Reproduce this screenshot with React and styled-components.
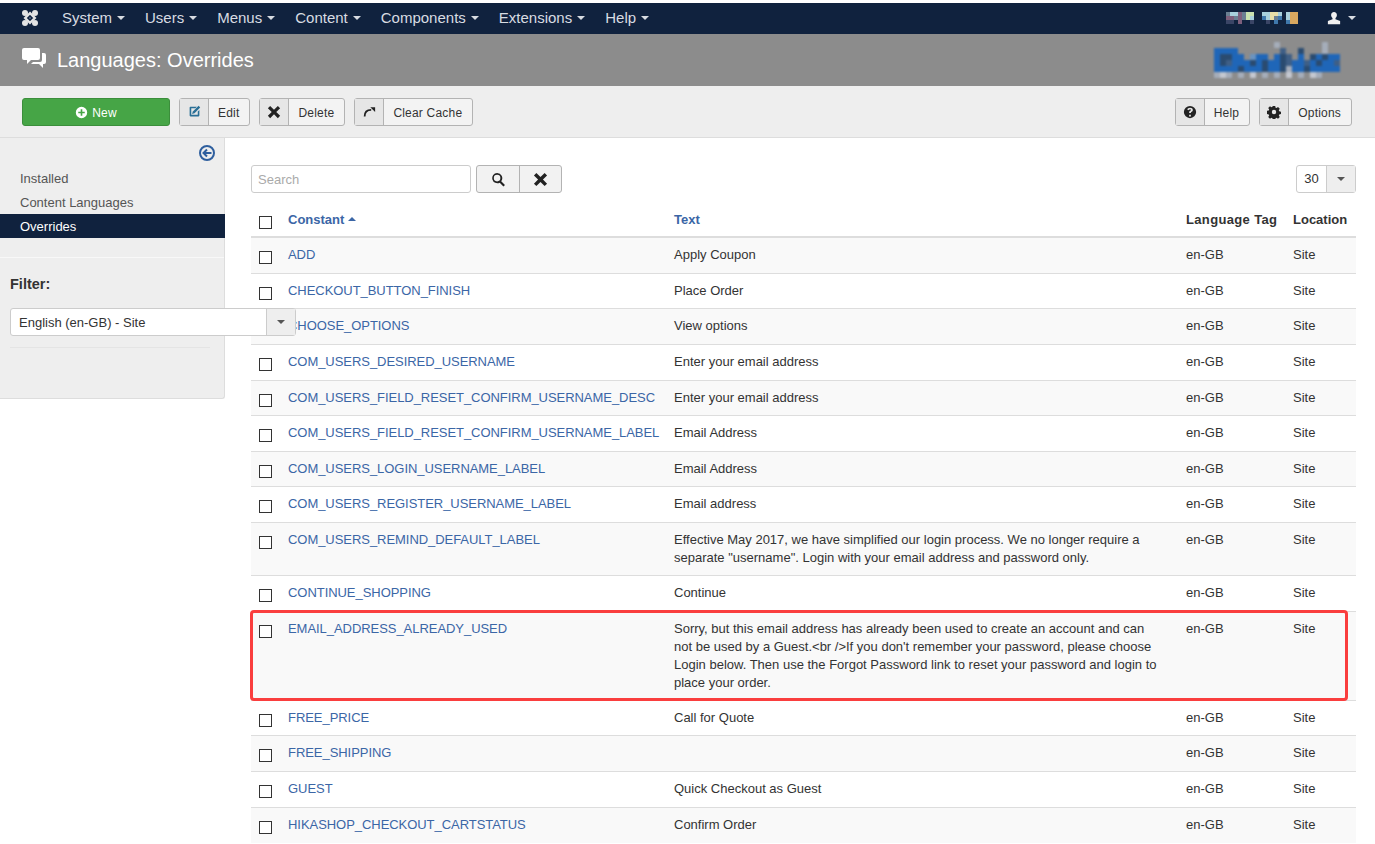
import React from "react";
import styled, { createGlobalStyle, css } from "styled-components";

const COLORS = {
  navy: "#10223e",
  link: "#3b66a6",
  border: "#ccc",
  text: "#333",
};

const NAV_ITEMS = ["System", "Users", "Menus", "Content", "Components", "Extensions", "Help"];

const ROWS = [
  ["ADD", "Apply Coupon"],
  ["CHECKOUT_BUTTON_FINISH", "Place Order"],
  ["CHOOSE_OPTIONS", "View options"],
  ["COM_USERS_DESIRED_USERNAME", "Enter your email address"],
  ["COM_USERS_FIELD_RESET_CONFIRM_USERNAME_DESC", "Enter your email address"],
  ["COM_USERS_FIELD_RESET_CONFIRM_USERNAME_LABEL", "Email Address"],
  ["COM_USERS_LOGIN_USERNAME_LABEL", "Email Address"],
  ["COM_USERS_REGISTER_USERNAME_LABEL", "Email address"],
  [
    "COM_USERS_REMIND_DEFAULT_LABEL",
    'Effective May 2017, we have simplified our login process. We no longer require a separate "username". Login with your email address and password only.',
  ],
  ["CONTINUE_SHOPPING", "Continue"],
  [
    "EMAIL_ADDRESS_ALREADY_USED",
    "Sorry, but this email address has already been used to create an account and can not be used by a Guest.<br />If you don't remember your password, please choose Login below. Then use the Forgot Password link to reset your password and login to place your order.",
    true,
  ],
  ["FREE_PRICE", "Call for Quote"],
  ["FREE_SHIPPING", ""],
  ["GUEST", "Quick Checkout as Guest"],
  ["HIKASHOP_CHECKOUT_CARTSTATUS", "Confirm Order"],
];

const GlobalStyle = createGlobalStyle`
  html, body {
    margin: 0;
    padding: 0;
    background: #fff;
    color: ${COLORS.text};
    font-family: "Liberation Sans", Arial, sans-serif;
    font-size: 13px;
    line-height: 18px;
  }
  * { box-sizing: border-box; }
`;

function JoomlaMark() {
  return (
    <svg width="18" height="18" viewBox="0 0 18 18" fill="#e4e4e4">
      <path d="M9 4.200 13.800 9 9 13.800 4.200 9Z" fill="none" stroke="#e4e4e4" strokeWidth="2.400" />
      <circle cx="4" cy="4" r="3" />
      <circle cx="14" cy="4" r="3" />
      <circle cx="4" cy="14" r="3" />
      <circle cx="14" cy="14" r="3" />
      <circle cx="9" cy="9" r="1" fill="#5a6c88" />
    </svg>
  );
}

function Mosaic({ width, height, cell, data, palette }) {
  return (
    <svg width={width} height={height} style={{ display: "block" }}>
      {data.map((row, y) =>
        row.split("").map((c, x) =>
          c === "." ? null : (
            <rect key={`${x}-${y}`} x={x * cell} y={y * cell} width={cell} height={cell} fill={palette[c]} />
          )
        )
      )}
    </svg>
  );
}

const Icon = ({ size = 14, color = "currentColor", children }) => (
  <svg width={size} height={size} viewBox="0 0 16 16" fill={color}>
    {children}
  </svg>
);

const PlusCircle = (p) => (
  <Icon {...p}>
    <path fillRule="evenodd" d="M8 1a7 7 0 1 0 0 14A7 7 0 0 0 8 1zM7 4h2v3h3v2H9v3H7V9H4V7h3z" />
  </Icon>
);
const EditIcon = (p) => (
  <Icon {...p}>
    <path d="M3 2h8L9 4H4v8h8V8l2-2v7a1 1 0 0 1-1 1H3a1 1 0 0 1-1-1V3a1 1 0 0 1 1-1z" />
    <path d="M13 1l2 2-7 7-3 1 1-3z" />
  </Icon>
);
const CrossIcon = (p) => (
  <Icon {...p}>
    <path d="M3.600 1 8 5.400 12.400 1 15 3.600 10.600 8 15 12.400 12.400 15 8 10.600 3.600 15 1 12.400 5.400 8 1 3.600z" />
  </Icon>
);
const RefreshIcon = (p) => (
  <Icon {...p}>
    <path d="M3 13C3 8 6 5.500 10.500 5.500" fill="none" stroke="#222" strokeWidth="2" />
    <path d="M9.500 2.500h5.500v5.500z" />
  </Icon>
);
const HelpIcon = (p) => (
  <Icon {...p}>
    <path
      fillRule="evenodd"
      d="M8 1a7 7 0 1 0 0 14A7 7 0 0 0 8 1zM7 11h2v2H7zm1-8c2 0 3.200 1 3.200 2.600 0 1.100-.6 1.700-1.300 2.200-.6.400-.9.700-.9 1.200H7c0-1.200.5-1.800 1.200-2.300.5-.4.900-.6.900-1.100 0-.4-.4-.7-1-.7-.7 0-1.200.4-1.400 1L4.800 5C5.200 3.800 6.400 3 8 3z"
    />
  </Icon>
);
const GearIcon = (p) => (
  <Icon {...p}>
    <path
      fillRule="evenodd"
      d="M6.600 1h2.800l.4 2 1.100.5 1.700-1.100 2 2-1.100 1.700.5 1.100 2 .4v2.800l-2 .4-.5 1.100 1.100 1.700-2 2-1.700-1.100-1.100.5-.4 2H6.600l-.4-2-1.100-.5-1.700 1.100-2-2 1.100-1.700-.5-1.100-2-.4V6.600l2-.4.5-1.100-1.100-1.700 2-2 1.700 1.100 1.100-.5zM8 5.500a2.500 2.500 0 1 0 0 5 2.500 2.500 0 0 0 0-5z"
    />
  </Icon>
);
const SearchIcon = (p) => (
  <Icon {...p}>
    <path
      fillRule="evenodd"
      d="M6.500 1a5.500 5.500 0 0 1 4.400 8.800l4 4-1.600 1.600-4-4A5.500 5.500 0 1 1 6.500 1zm0 2a3.500 3.500 0 1 0 0 7 3.500 3.500 0 0 0 0-7z"
    />
  </Icon>
);
const UserIcon = (p) => (
  <Icon {...p}>
    <path d="M8 1c2 0 3.300 1.500 3.300 3.500 0 1.500-.7 2.800-1.600 3.500v1.300L15 11.500V15H1v-3.500l5.300-2.200V8C5.400 7.300 4.700 6 4.700 4.500 4.700 2.500 6 1 8 1z" />
  </Icon>
);
const BackIcon = () => (
  <svg width="18" height="18" viewBox="0 0 18 18" fill="none" stroke="#2f5f9e" strokeWidth="2">
    <circle cx="9" cy="9" r="7" />
    <path d="M13.500 9H6M9 5.500 5.500 9 9 12.500" />
  </svg>
);

export default function App() {
  return (
    <Page>
      <GlobalStyle />
      <Navbar>
        <Brand>
          <JoomlaMark />
        </Brand>
        <NavList>
          {NAV_ITEMS.map((item) => (
            <NavItem key={item}>
              {item}
              <Caret $color="#d8dce2" />
            </NavItem>
          ))}
        </NavList>
        <NavRight>
          <NavMosaic>
            <Mosaic
              width={72}
              height={12}
              cell={4}
              palette={{
                a: "#6a7f92",
                b: "#a8d0dc",
                c: "#7e5f7c",
                d: "#c9e2b0",
                e: "#e8dfa8",
                f: "#3f78ac",
                g: "#d9a860",
                h: "#3a4566",
              }}
              data={["abbcadd..bbeeb.bgg", "ccacadb..fbeaf.bgg", "hh.c..h...h.f..fgg"]}
            />
          </NavMosaic>
          <UserMenu>
            <UserIcon size={14} color="#f0f0f0" />
            <Caret $color="#d8dce2" />
          </UserMenu>
        </NavRight>
      </Navbar>

      <Header>
        <TitleIcon>
          <svg width="24" height="22" viewBox="0 0 24 22" fill="#fff">
            <path d="M2 1h14a2 2 0 0 1 2 2v8a2 2 0 0 1-2 2H9l-4 4v-4H2a2 2 0 0 1-2-2V3a2 2 0 0 1 2-2z" />
            <path d="M20 6h2a2 2 0 0 1 2 2v7a2 2 0 0 1-2 2h-1v4l-4-4H9l2-2h7a2 2 0 0 0 2-2z" />
          </svg>
        </TitleIcon>
        <Title>Languages: Overrides</Title>
        <LogoSlot>
          <Mosaic
            width={126}
            height={36}
            cell={6}
            palette={{ a: "#1f66b8", b: "#6a93c0", c: "#3f5f86", d: "#a5adba", e: "#2a4b70", f: "#c4c8d0" }}
            data={[
              "..........d.......d..",
              "aaaa.......c..e...d..",
              "aeeaa.baa.aec.a.eaeaa",
              "aecaaaeaeaaecaacaeaac",
              "aaaaeaaaeaaedaaeaaaaa",
              "dfd.d.f.d.d.f.d.fd...",
            ]}
          />
        </LogoSlot>
      </Header>

      <Toolbar>
        <ToolGroup>
          <NewButton>
            <PlusCircle size={13} color="#fff" />
            New
          </NewButton>
          <ToolButton>
            <ToolIcon $color="#2a6f96">
              <EditIcon size={13} />
            </ToolIcon>
            <ToolLabel>Edit</ToolLabel>
          </ToolButton>
          <ToolButton>
            <ToolIcon>
              <CrossIcon size={14} />
            </ToolIcon>
            <ToolLabel>Delete</ToolLabel>
          </ToolButton>
          <ToolButton>
            <ToolIcon>
              <RefreshIcon size={14} />
            </ToolIcon>
            <ToolLabel>Clear Cache</ToolLabel>
          </ToolButton>
        </ToolGroup>
        <ToolGroup>
          <ToolButton>
            <ToolIcon>
              <HelpIcon size={14} />
            </ToolIcon>
            <ToolLabel>Help</ToolLabel>
          </ToolButton>
          <ToolButton>
            <ToolIcon>
              <GearIcon size={14} />
            </ToolIcon>
            <ToolLabel>Options</ToolLabel>
          </ToolButton>
        </ToolGroup>
      </Toolbar>

      <Body>
        <Sidebar>
          <SidebarToggle>
            <BackIcon />
          </SidebarToggle>
          <SideNav>
            <SideLink>Installed</SideLink>
            <SideLink>Content Languages</SideLink>
            <SideLink $active>Overrides</SideLink>
          </SideNav>
          <FilterBlock>
            <FilterTitle>Filter:</FilterTitle>
            <FilterSelect>
              <FilterValue>English (en-GB) - Site</FilterValue>
              <SelectArrow>
                <Caret $color="#555" />
              </SelectArrow>
            </FilterSelect>
            <FilterRule />
          </FilterBlock>
        </Sidebar>

        <Main>
          <SearchBar>
            <SearchInput>Search</SearchInput>
            <SearchButtons>
              <SearchButton>
                <SearchIcon size={15} color="#222" />
              </SearchButton>
              <SearchButton>
                <CrossIcon size={15} color="#222" />
              </SearchButton>
            </SearchButtons>
            <LimitSelect>
              <LimitValue>30</LimitValue>
              <SelectArrow>
                <Caret $color="#555" />
              </SelectArrow>
            </LimitSelect>
          </SearchBar>

          <Table>
            <colgroup>
              <col width="29" />
              <col width="386" />
              <col width="512" />
              <col width="107" />
              <col width="71" />
            </colgroup>
            <thead>
              <tr>
                <HeadCell>
                  <Check />
                </HeadCell>
                <HeadCell $link>
                  Constant <SortCaret />
                </HeadCell>
                <HeadCell $link>Text</HeadCell>
                <HeadCell $spaced>Language Tag</HeadCell>
                <HeadCell>Location</HeadCell>
              </tr>
            </thead>
            <tbody>
              {ROWS.map(([key, text, marked]) => (
                <Row key={key}>
                  <CheckCell>
                    <Check />
                  </CheckCell>
                  <KeyCell>
                    {key}
                    {marked && <Highlight />}
                  </KeyCell>
                  <TextCell>{text}</TextCell>
                  <Cell>en-GB</Cell>
                  <Cell>Site</Cell>
                </Row>
              ))}
            </tbody>
          </Table>
        </Main>
      </Body>
    </Page>
  );
}

const Page = styled.div`
  width: 1375px;
  height: 844px;
  overflow: hidden;
  padding-top: 3px;
  background: #fff;
`;

const Navbar = styled.nav`
  height: 31px;
  background: ${COLORS.navy};
  display: flex;
  align-items: center;
  padding: 0 19px 2px 21px;
`;

const Brand = styled.div`
  display: flex;
  width: 41px;
`;

const NavList = styled.div`
  display: flex;
  gap: 20px;
`;

const NavItem = styled.div`
  color: #d8dce2;
  font-size: 15px;
  display: flex;
  align-items: center;
  gap: 5px;
`;

const Caret = styled.span`
  display: inline-block;
  width: 0;
  height: 0;
  border-left: 4px solid transparent;
  border-right: 4px solid transparent;
  border-top: 4px solid ${(p) => p.$color};
`;

const NavRight = styled.div`
  margin-left: auto;
  display: flex;
  align-items: center;
  gap: 29px;
`;

const NavMosaic = styled.div`
  filter: blur(0.5px);
`;

const UserMenu = styled.div`
  display: flex;
  align-items: center;
  gap: 7px;
`;

const Header = styled.header`
  height: 52px;
  background: #8c8c8c;
  display: flex;
  align-items: center;
  padding: 0 35px 0 22px;
`;

const TitleIcon = styled.div`
  display: flex;
  margin-right: 11px;
  margin-top: -4px;
`;

const Title = styled.h1`
  margin: 0;
  color: #fff;
  font-size: 20px;
  font-weight: 400;
`;

const LogoSlot = styled.div`
  margin-left: auto;
  filter: blur(1px);
`;

const Toolbar = styled.div`
  height: 52px;
  background: #eee;
  border-bottom: 1px solid #ddd;
  display: flex;
  align-items: center;
  justify-content: space-between;
  padding: 0 23px 0 22px;
`;

const ToolGroup = styled.div`
  display: flex;
  gap: 9px;
`;

const buttonBase = css`
  height: 28px;
  border: 1px solid #b3b3b3;
  border-radius: 3px;
  background: #f3f3f3;
  display: flex;
  align-items: stretch;
  font-size: 12px;
  letter-spacing: 0.2px;
`;

const NewButton = styled.div`
  ${buttonBase}
  width: 148px;
  background: #46a546;
  border-color: #3b8e3b;
  color: #fff;
  align-items: center;
  justify-content: center;
  gap: 4px;
  padding-top: 2px;
`;

const ToolButton = styled.div`
  ${buttonBase}
`;

const ToolIcon = styled.div`
  width: 29px;
  background: #e6e6e6;
  border-right: 1px solid #b3b3b3;
  display: flex;
  align-items: center;
  justify-content: center;
  color: ${(p) => p.$color || "#222"};
`;

const ToolLabel = styled.div`
  padding: 2px 10px 0 9px;
  display: flex;
  align-items: center;
`;

const Body = styled.div`
  display: flex;
  align-items: flex-start;
`;

const Sidebar = styled.aside`
  width: 225px;
  height: 261px;
  flex: none;
  background: #eee;
  border-right: 1px solid #ddd;
  border-bottom: 1px solid #ddd;
  border-bottom-right-radius: 3px;
  position: relative;
  z-index: 1;
`;

const SidebarToggle = styled.div`
  display: flex;
  justify-content: flex-end;
  padding: 6px 8px 0 0;
  height: 28px;
`;

const SideNav = styled.div`
  display: flex;
  flex-direction: column;
  padding-bottom: 19px;
  border-bottom: 1px solid #f8f8f8;
`;

const SideLink = styled.div`
  height: 24px;
  line-height: 26px;
  padding-left: 20px;
  font-size: 13px;
  margin-right: -1px;
  color: ${(p) => (p.$active ? "#fff" : "#555")};
  background: ${(p) => (p.$active ? COLORS.navy : "transparent")};
`;

const FilterBlock = styled.div`
  padding: 17px 14px 0 10px;
`;

const FilterTitle = styled.div`
  font-weight: 700;
  font-size: 14.5px;
  margin-bottom: 15px;
`;

const FilterSelect = styled.div`
  width: 286px;
  height: 28px;
  background: #fff;
  border: 1px solid #ccc;
  border-radius: 3px;
  display: flex;
  align-items: center;
`;

const FilterValue = styled.div`
  flex: 1;
  padding: 1px 0 0 8px;
  font-size: 13px;
`;

const SelectArrow = styled.div`
  width: 29px;
  align-self: stretch;
  background: #eee;
  border-left: 1px solid #ccc;
  display: flex;
  align-items: center;
  justify-content: center;
`;

const FilterRule = styled.div`
  height: 1px;
  background: #e4e4e4;
  margin-top: 11px;
`;

const Main = styled.main`
  flex: 1;
  padding: 27px 19px 0 26px;
`;

const SearchBar = styled.div`
  display: flex;
  align-items: center;
  margin-bottom: 12.4px;
`;

const SearchInput = styled.div`
  width: 220px;
  height: 28px;
  border: 1px solid #ccc;
  border-radius: 3px;
  padding: 1px 0 0 6px;
  line-height: 26px;
  color: #aaa;
  font-size: 13px;
`;

const SearchButtons = styled.div`
  ${buttonBase}
  margin-left: 5px;
  background: #f2f2f2;
`;

const SearchButton = styled.div`
  width: 42px;
  display: flex;
  align-items: center;
  justify-content: center;
  & + & {
    border-left: 1px solid #b3b3b3;
  }
`;

const LimitSelect = styled.div`
  margin-left: auto;
  width: 60px;
  height: 28px;
  border: 1px solid #ccc;
  border-radius: 3px;
  display: flex;
  align-items: center;
`;

const LimitValue = styled.div`
  flex: 1;
  text-align: center;
  font-size: 13px;
`;

const Table = styled.table`
  width: 1105px;
  table-layout: fixed;
  border-collapse: collapse;
`;

const HeadCell = styled.th`
  text-align: left;
  padding: 0 8px 7px;
  height: 32px;
  white-space: nowrap;
  vertical-align: bottom;
  font-size: 13px;
  letter-spacing: ${(p) => (p.$spaced ? "0.35px" : "0")};
  color: ${(p) => (p.$link ? COLORS.link : COLORS.text)};
  border-bottom: 2px solid #ddd;
`;

const SortCaret = styled.span`
  display: inline-block;
  width: 0;
  height: 0;
  vertical-align: 3px;
  border-left: 4px solid transparent;
  border-right: 4px solid transparent;
  border-bottom: 4px solid ${COLORS.link};
`;

const Row = styled.tr`
  height: 35.67px;
  &:nth-child(odd) {
    background: #f9f9f9;
  }
`;

const Cell = styled.td`
  padding: 8px;
  vertical-align: top;
  font-size: 13px;
  border-top: 1px solid #ddd;
`;

const TextCell = styled(Cell)`
  padding-right: 16px;
`;

const CheckCell = styled(Cell)`
  padding: 13px 8px 0;
`;

const KeyCell = styled(Cell)`
  color: ${COLORS.link};
  position: relative;
  letter-spacing: -0.05px;
`;

const Check = styled.span`
  display: block;
  width: 13px;
  height: 13px;
  border: 1px solid #333;
  background: #fff;
`;

const Highlight = styled.span`
  position: absolute;
  left: -30px;
  top: -2px;
  width: 1098px;
  height: 91px;
  border: 3px solid #fa3e3e;
  border-radius: 4px;
  pointer-events: none;
`;
